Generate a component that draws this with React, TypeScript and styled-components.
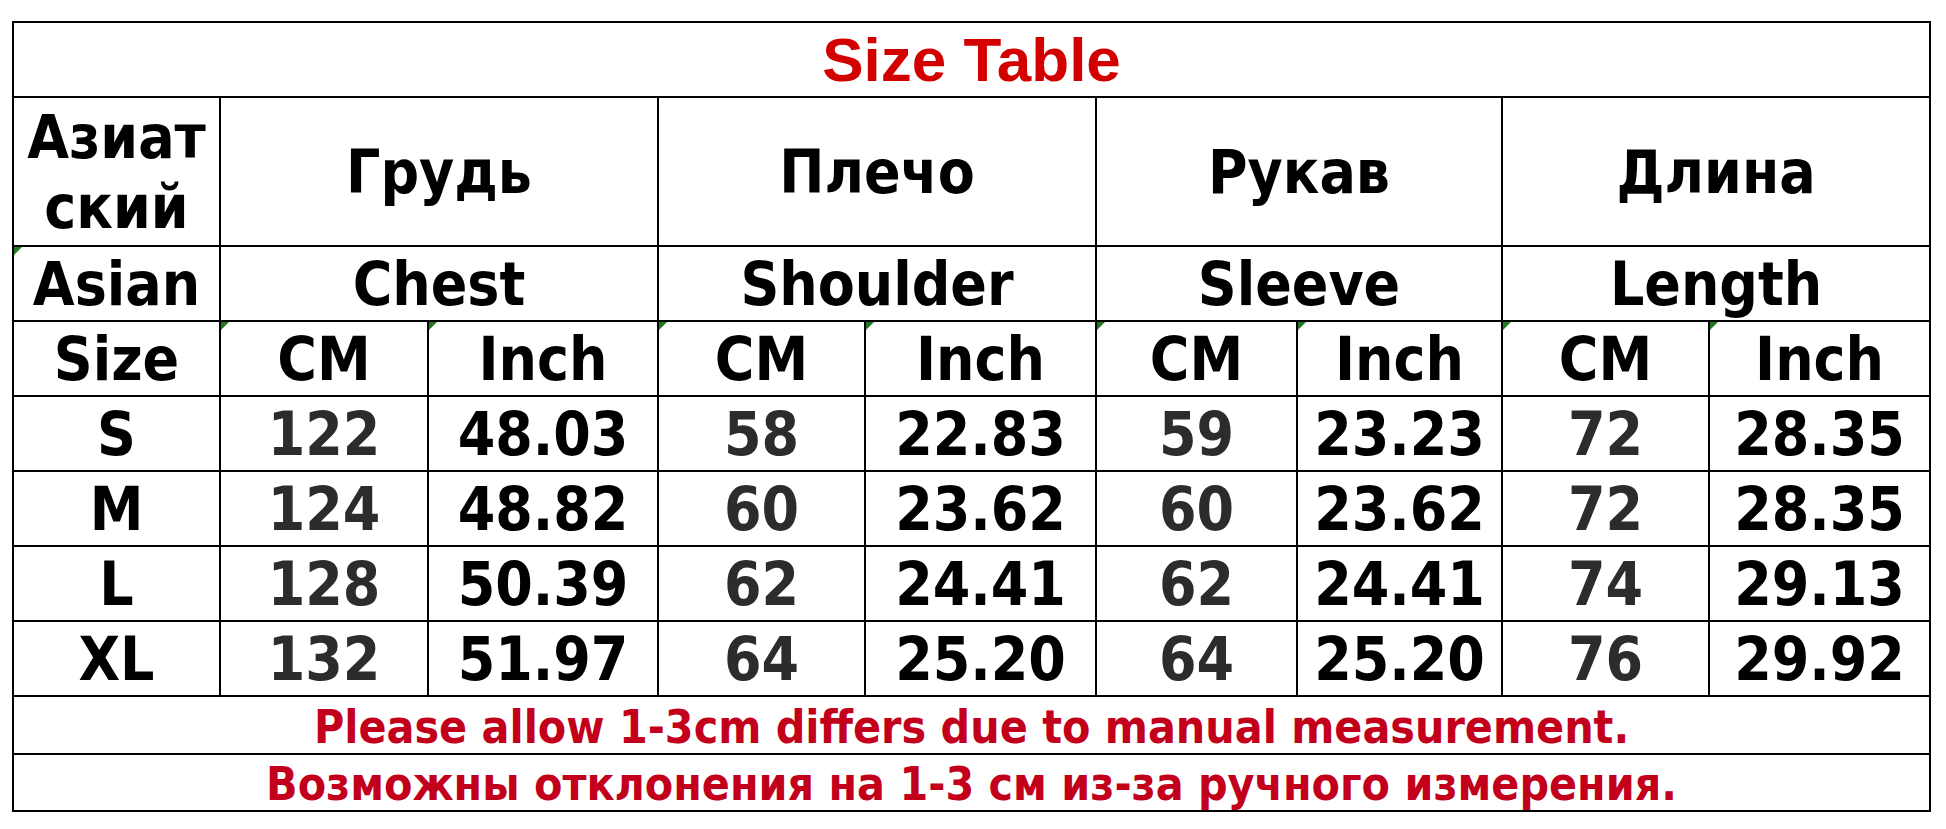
import React, { FC } from "react";
import styled, { createGlobalStyle } from "styled-components";

const GlobalStyle = createGlobalStyle`
  body {
    margin: 0;
    background: #ffffff;
  }
`;

const columns = [207, 208, 230, 207, 231, 201, 205, 207, 221];

const measures = [
  { ru: "Грудь", en: "Chest" },
  { ru: "Плечо", en: "Shoulder" },
  { ru: "Рукав", en: "Sleeve" },
  { ru: "Длина", en: "Length" },
];

const sizes = [
  ["S", "122", "48.03", "58", "22.83", "59", "23.23", "72", "28.35"],
  ["M", "124", "48.82", "60", "23.62", "60", "23.62", "72", "28.35"],
  ["L", "128", "50.39", "62", "24.41", "62", "24.41", "74", "29.13"],
  ["XL", "132", "51.97", "64", "25.20", "64", "25.20", "76", "29.92"],
];

const App: FC = () => {
  return (
    <Page>
      <GlobalStyle />
      <SizeTable>
        <colgroup>
          {columns.map((w, i) => (
            <Col key={i} $w={w} />
          ))}
        </colgroup>
        <tbody>
          <Row $h={75}>
            <TitleCell colSpan={9}>Size Table</TitleCell>
          </Row>
          <Row $h={149}>
            <Cell>
              <WrapLine>Азиат</WrapLine>
              <WrapLine>ский</WrapLine>
            </Cell>
            {measures.map((m) => (
              <Cell key={m.ru} colSpan={2}>
                {m.ru}
              </Cell>
            ))}
          </Row>
          <Row $h={75}>
            <Cell $flag>Asian</Cell>
            {measures.map((m) => (
              <Cell key={m.en} colSpan={2}>
                {m.en}
              </Cell>
            ))}
          </Row>
          <Row $h={75}>
            <Cell>Size</Cell>
            {measures.map((m) => (
              <React.Fragment key={m.en}>
                <Cell $flag>CM</Cell>
                <Cell $flag>Inch</Cell>
              </React.Fragment>
            ))}
          </Row>
          {sizes.map((row) => (
            <Row key={row[0]} $h={75}>
              {row.map((v, i) => (
                <Cell key={i} $grey={i % 2 === 1}>
                  {v}
                </Cell>
              ))}
            </Row>
          ))}
          <Row $h={58}>
            <NoteCell colSpan={9}>
              Please allow 1-3cm differs due to manual measurement.
            </NoteCell>
          </Row>
          <Row $h={57}>
            <NoteCell colSpan={9}>
              Возможны отклонения на 1-3 см из-за ручного измерения.
            </NoteCell>
          </Row>
        </tbody>
      </SizeTable>
    </Page>
  );
};

export default App;

const Page = styled.div`
  padding: 21px 0 0 12px;
  width: 1946px;
  height: 829px;
  box-sizing: border-box;
  overflow: hidden;
`;

const SizeTable = styled.table`
  border-collapse: collapse;
  table-layout: fixed;
  width: 1917px;
  font-family: "DejaVu Sans", "Liberation Sans", sans-serif;
  font-stretch: condensed;
  font-weight: bold;
`;

const Col = styled.col<{ $w: number }>`
  width: ${({ $w }) => $w}px;
`;

const Row = styled.tr<{ $h: number }>`
  height: ${({ $h }) => $h}px;
`;

const Cell = styled.td<{ $grey?: boolean; $flag?: boolean }>`
  position: relative;
  border: 2px solid #000000;
  padding: 0;
  text-align: center;
  vertical-align: middle;
  font-size: 60px;
  line-height: 1;
  color: ${({ $grey }) => ($grey ? "#2c2c2c" : "#000000")};
  white-space: nowrap;

  &::before {
    content: "";
    display: ${({ $flag }) => ($flag ? "block" : "none")};
    position: absolute;
    top: 0;
    left: 0;
    width: 0;
    height: 0;
    border-top: 8px solid #1f7a1f;
    border-right: 8px solid transparent;
  }
`;

const WrapLine = styled.span`
  display: block;
  height: 70px;
  line-height: 70px;
`;

const TitleCell = styled(Cell)`
  font-family: "Liberation Sans", Arial, sans-serif;
  font-stretch: normal;
  font-size: 62px;
  color: #d30000;
`;

const NoteCell = styled(Cell)`
  font-size: 46px;
  padding-top: 3px;
  color: #c3001b;
`;
